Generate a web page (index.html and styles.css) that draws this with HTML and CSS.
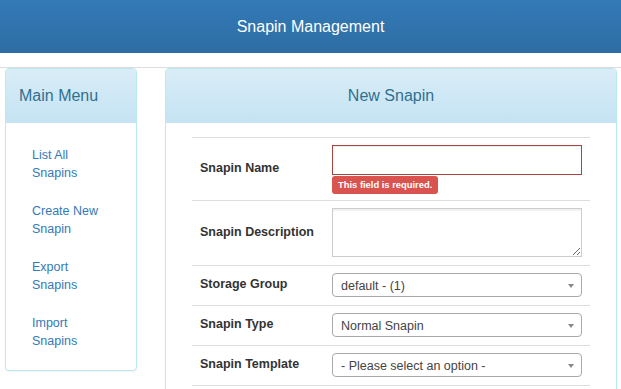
FILE: index.html
```html
<!DOCTYPE html>
<html lang="en">
<head>
    <meta charset="UTF-8">
    <meta name="viewport" content="width=device-width, initial-scale=1.0">
    <title>Snapin Management</title>
    <link rel="stylesheet" href="styles.css">
</head>
<body>
    <header class="title-bar">Snapin Management</header>

    <div class="content">
        <!-- Side menu -->
        <div class="panel side-panel">
            <div class="panel-heading side-heading">Main Menu</div>
            <ul class="menu">
                <li><a href="#">List All Snapins</a></li>
                <li><a href="#">Create New Snapin</a></li>
                <li><a href="#">Export Snapins</a></li>
                <li><a href="#">Import Snapins</a></li>
            </ul>
        </div>

        <!-- New snapin form -->
        <div class="panel main-panel">
            <div class="panel-heading">New Snapin</div>
            <div class="panel-body">
                <table class="form-table">
                    <colgroup>
                        <col class="label-col">
                        <col>
                    </colgroup>
                    <tr>
                        <td class="field-label">Snapin Name</td>
                        <td class="field has-error">
                            <input type="text" class="text-input error-input">
                            <div><span class="error-badge">This field is required.</span></div>
                        </td>
                    </tr>
                    <tr>
                        <td class="field-label">Snapin Description</td>
                        <td class="field"><textarea class="text-area"></textarea></td>
                    </tr>
                    <tr>
                        <td class="field-label">Storage Group</td>
                        <td class="field"><div class="select-box">default - (1)<span class="arrow"></span></div></td>
                    </tr>
                    <tr>
                        <td class="field-label">Snapin Type</td>
                        <td class="field"><div class="select-box">Normal Snapin<span class="arrow"></span></div></td>
                    </tr>
                    <tr>
                        <td class="field-label">Snapin Template</td>
                        <td class="field"><div class="select-box">- Please select an option -<span class="arrow"></span></div></td>
                    </tr>
                </table>
            </div>
        </div>
    </div>
</body>
</html>
```

FILE: styles.css
```css
body {
    margin: 0;
    padding: 0;
    font-family: 'Liberation Sans', Arial, sans-serif;
    font-size: 12.5px;
    color: #333;
    background: white;
    overflow: hidden;
}

.title-bar {
    height: 53px;
    line-height: 53px;
    text-align: center;
    color: white;
    font-size: 16px;
    background: linear-gradient(#337ab7, #2e6da4);
}

.content {
    display: flex;
    align-items: flex-start;
    gap: 28px;
    margin-top: 14px;
    padding: 0 4px 0 5px;
    border-top: 1px solid #ddd;
}

/* Panels */
.panel {
    border: 1px solid #bce8f1;
    border-radius: 4px;
    background: white;
    box-shadow: 0 1px 1px rgba(0, 0, 0, 0.05);
}

.panel-heading {
    height: 54px;
    line-height: 54px;
    text-align: center;
    font-size: 16px;
    color: #31708f;
    background: linear-gradient(#d9edf7, #c4e3f3);
    border-radius: 3px 3px 0 0;
}

.side-panel {
    width: 130px;
    flex-shrink: 0;
}

.side-heading {
    text-align: left;
    padding-left: 13px;
}

.menu {
    list-style: none;
    margin: 0;
    padding: 23px 0 20px 26px;
}

.menu li {
    width: 80px;
    line-height: 18px;
    margin-bottom: 20px;
}

.menu li:last-child {
    margin-bottom: 0;
}

.menu a {
    color: #337ab7;
    text-decoration: none;
}

.main-panel {
    flex: 1;
    height: 330px;
}

.panel-body {
    padding: 14px 26px 0;
}

/* Form table */
.form-table {
    width: 100%;
    border-collapse: collapse;
    table-layout: fixed;
}

.label-col {
    width: 132px;
}

.form-table tr {
    border-top: 1px solid #ddd;
    border-bottom: 1px solid #ddd;
}

.form-table td {
    padding: 7px 8px 8px;
}

.form-table .field-label {
    font-weight: bold;
    vertical-align: middle;
    padding-bottom: 10px;
}

.form-table .field.has-error {
    padding-bottom: 6px;
}

.text-input,
.text-area {
    display: block;
    box-sizing: border-box;
    width: 100%;
    margin: 0;
    border: 1px solid #ccc;
    border-radius: 0;
    background: white;
    box-shadow: inset 0 1px 1px rgba(0, 0, 0, 0.075);
    font-family: inherit;
}

.text-input {
    height: 30px;
}

.error-input {
    border-color: #a94442;
}

.text-area {
    height: 49px;
    box-shadow: inset 0 2px 1px #f0f0f0;
}

.error-badge {
    display: inline-block;
    margin-top: 1px;
    height: 18px;
    line-height: 18px;
    padding: 0 6px;
    border-radius: 3px;
    background: #d9534f;
    color: white;
    font-weight: bold;
    font-size: 9.4px;
}

.select-box {
    position: relative;
    box-sizing: border-box;
    height: 24px;
    line-height: 24px;
    padding-left: 8px;
    border: 1px solid #aaa;
    border-radius: 4px;
    color: #444;
}

.arrow {
    position: absolute;
    right: 7px;
    top: 10px;
    width: 0;
    height: 0;
    border-style: solid;
    border-width: 4px 3px 0;
    border-color: #888 transparent transparent;
}
```
